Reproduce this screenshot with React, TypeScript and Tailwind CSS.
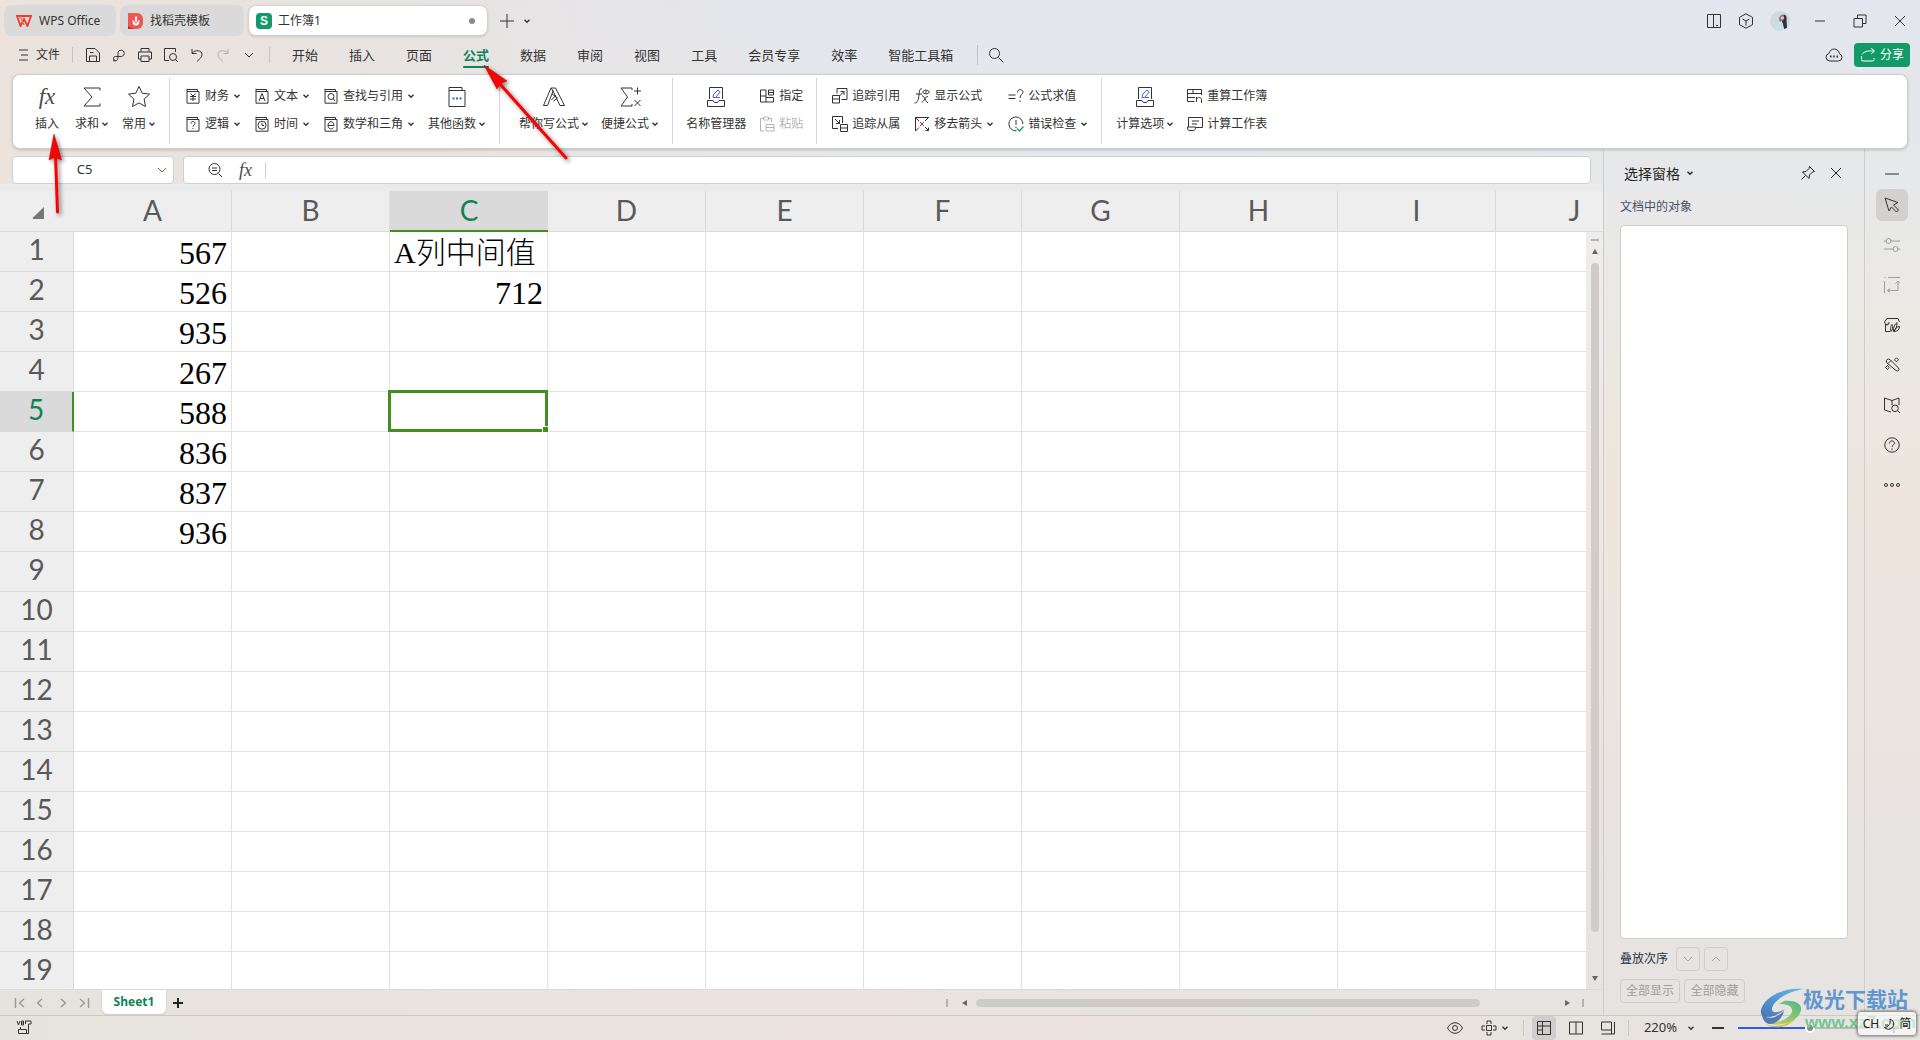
import type { ReactNode } from 'react';
import clsx from 'clsx';

const INK = 'text-[#333]';

type IconProps = { d: string; size?: string; className?: string; box?: string; children?: ReactNode };

function Icon({ d, size = 'size-4', className, box = '0 0 16 16', children }: IconProps) {
  return (
    <svg
      viewBox={box}
      className={clsx('shrink-0', size, className)}
      fill="none"
      stroke="currentColor"
      strokeWidth="1"
      strokeLinejoin="round"
      aria-hidden="true"
    >
      <path d={d} />
      {children}
    </svg>
  );
}

// Small caret used after drop-down labels
function Caret({ className }: { className?: string }) {
  return (
    <svg viewBox="0 0 8 8" className={clsx('size-2 shrink-0', className)} fill="none" stroke="currentColor" strokeWidth="1.4" aria-hidden="true">
      <path d="M1.5 2.8 4 5.2 6.5 2.8" />
    </svg>
  );
}

function Fx({ className }: { className?: string }) {
  return (
    <span className={clsx("font-['Liberation_Serif',serif] italic text-[#4a4a4a]", className)}>fx</span>
  );
}

const PAGE = 'M2 1.5h10.5M2 .8v14.4h12V3.5H2M12.5 1.5v2';

const QUICK = [
  { label: '保存', left: 'ml-3', d: 'M1.5 14.5V1.5h8.5l4.5 4.5v8.5zM4.5 14.5V9h7v5.5M5 5.5h3.5' },
  { label: '输出', left: 'ml-[10px]', d: 'M2 13.5c3.500 1.500 5-1 5-3V5.500a3.200 3.200 0 1 1 3.500 4H4.500a2 2 0 1 0 0 4' },
  { label: '打印', left: 'ml-[10px]', d: 'M4 5V1.500h8V5M4 12H1.500V5h13v7H12M4 9h8v5.500H4z' },
  { label: '打印预览', left: 'ml-[10px]', d: 'M6 13.500H1.500v-12h11V5M10 6.500a3.500 3.500 0 1 1 0 7 3.500 3.500 0 0 1 0-7M12.500 12.500l2.500 2.500' },
  { label: '撤销', left: 'ml-[10px]', d: 'M3 2v4.500h4.500M3 6C6 2.500 13 3 13 7.500c0 3-2.500 4.500-5 7' },
];

const MENUS = ['开始', '插入', '页面', '公式', '数据', '审阅', '视图', '工具', '会员专享', '效率', '智能工具箱'];

function Big({ icon, label, drop, className }: { icon: ReactNode; label: string; drop?: boolean; className?: string }) {
  return (
    <button className={clsx('flex flex-col items-center gap-2', className)}>
      <span className="flex h-[22px] items-center justify-center">{icon}</span>
      <span className="flex h-4 items-center gap-0.5 whitespace-nowrap text-[12px] leading-4">
        {label}
        {drop && <Caret />}
      </span>
    </button>
  );
}

function Small({ icon, label, drop, dim }: { icon: ReactNode; label: string; drop?: boolean; dim?: boolean }) {
  return (
    <button className={clsx('flex h-4 items-center whitespace-nowrap text-[12px] leading-4', dim && 'text-[#b4b4b4]')}>
      {icon}
      <span className="ml-1">{label}</span>
      {drop && <Caret className="ml-1" />}
    </button>
  );
}

function Stack({ children, className }: { children: ReactNode; className?: string }) {
  return <div className={clsx('flex flex-col items-start gap-3 pt-0.5', className)}>{children}</div>;
}

function Divider() {
  return <div className="-mt-2 mx-[13px] h-[66px] w-px shrink-0 bg-[#d6d6d6]" />;
}

function PageIcon({ d }: { d: string }) {
  return <Icon d={PAGE}><path d={d} /></Icon>;
}

function EditBox() {
  return (
    <Icon box="0 0 20 22" size="h-[22px] w-5" d="M3.500 13V1.500h13V13M1.500 14.500H7l1.500 2h3l1.500-2h5.500v6h-17z">
      <path d="M7 11.500l.5-3L12 4l2.200 2-4.700 5.500z M10 11.500h4" stroke="#3a62e0" />
    </Icon>
  );
}

function Ribbon() {
  return (
    <section className="relative z-10 ml-3 mr-3 flex h-[75px] items-start rounded-lg border border-[#d0cfcf] bg-white pl-[19px] pt-[11px] shadow-[0_1px_3px_rgba(0,0,0,0.18)]">
      <div className="flex gap-[13px]">
        <Big className="w-[30px]" icon={<Fx className="text-[23px] leading-5" />} label="插入" />
        <Big drop icon={<Icon size="size-[22px]" box="0 0 22 22" d="M19 4.500V2H3l8 9-8 9h16v-2.500" />} label="求和" />
        <Big drop icon={<Icon size="size-6" box="0 0 24 24" d="M12 1.500l3.200 6.700 7.300.9-5.400 5 1.400 7.400L12 17.900l-6.500 3.600 1.400-7.400-5.400-5 7.300-.9z" />} label="常用" />
      </div>
      <Divider />
      <div className="flex gap-[13px] pl-0.5">
        <Stack>
          <Small drop icon={<PageIcon d="M5.500 5.500 8 8l2.500-2.500M5 8.500h6M5 11h6M8 8v5" />} label="财务" />
          <Small drop icon={<PageIcon d="M6 7.500c0-3 4-2.500 4 0 0 1.500-2 1.500-2 3.200M8 12v1" />} label="逻辑" />
        </Stack>
        <Stack>
          <Small drop icon={<PageIcon d="M5 13l3-7.500 3 7.500M6 10.500h4" />} label="文本" />
          <Small drop icon={<PageIcon d="M8 5.200a4 4 0 1 1 0 8 4 4 0 0 1 0-8M8 7v2.500h2" />} label="时间" />
        </Stack>
        <Stack>
          <Small drop icon={<PageIcon d="M8 5.500a3 3 0 1 1 0 6 3 3 0 0 1 0-6M10 10.500l2 2.500" />} label="查找与引用" />
          <Small drop icon={<PageIcon d="M5 9.500h6c0-5-6-5-6 0 0 4 4.500 4 5.500 2" />} label="数学和三角" />
        </Stack>
        <Big
          drop
          icon={
            <Icon box="0 0 20 22" size="h-[22px] w-5" d="M2 4.500V1.500h13v3M2 4.500h16v16H2z">
              <path d="M5.500 12.500h2M9 12.500h2M12.500 12.500h2" stroke="#3a62e0" strokeWidth="2" />
            </Icon>
          }
          label="其他函数"
        />
      </div>
      <Divider />
      <div className="flex gap-3 pl-1.5">
        <Big drop icon={<Icon box="0 0 24 22" size="h-[22px] w-6" d="M1.500 19.500 9 2h4.500l9 17.500H18L10.500 4M9 2l2 3-5.500 14.500h-4M14 9 9.500 14M10 8l5.500 4-4 3" />} label="帮你写公式" />
        <Big drop icon={<Icon box="0 0 24 22" size="h-[22px] w-6" d="M14 4V2H3l6.500 9L3 20h11v-2M16 5h7M19.500 1.500v7M16.500 14l6 6M22.500 14l-6 6" />} label="便捷公式" />
      </div>
      <Divider />
      <div className="flex gap-[13px]">
        <Big icon={<EditBox />} label="名称管理器" />
        <Stack>
          <Small icon={<Icon d="M7 2H1.500v12H7zM1.500 8H7M9.500 2h5v5h-5zM7 9.500h7.500V14H7M9.500 4.500h5" />} label="指定" />
          <Small dim icon={<Icon d="M5 15H1.500V2.500H4M10 2.500h2.500V6M4.500 1h5v3h-5zM7 8.500h8V15H7zM7 11.500h8" />} label="粘贴" />
        </Stack>
      </div>
      <Divider />
      <div className="flex gap-[14px] pl-0.5">
        <Stack>
          <Small icon={<Icon d="M5 5.500v-5h10v11H9.500M.5 7.500h7V15h-7zM.5 11h7M7.500 8l4.500-4.500M8.500 3.500H12V7" />} label="追踪引用" />
          <Small icon={<Icon d="M6 12.500H.5v-12h10V7M8.500 8.500h7v7h-7zM8.500 12h7M3 3l4.500 4.500M7.500 4v3.500H4" />} label="追踪从属" />
        </Stack>
        <Stack>
          <Small icon={<Icon d="M8 1C5.500 0 5.500 3 5 7s-1 8-4.500 8M2 6h6M8 8c3-1 3 7 6 6.500M14 8.500c-2.500-1-4 6-6.500 5.500M8.500 4c1.500-2.500 5.500-2.500 7 0-1.500 2.500-5.500 2.500-7 0M12 3v2" />} label="显示公式" />
          <Small
            drop
            icon={
              <Icon d="M1.500 15V1.500H15M1.500 15 5 11.500M11 5l3-3M11 11l3.500 3.500M14.500 11.500v3h-3M1.500 1.500 5 5">
                <path d="M6 6l4 4M10 6l-4 4" stroke="#d0214b" />
              </Icon>
            }
            label="移去箭头"
          />
        </Stack>
        <Stack>
          <Small icon={<Icon d="M.5 7h7M.5 10.500h7M9.500 4.500c0-4 5.500-3.500 5.500-.5 0 2.500-3 2.500-3 6M12 12.500v1.500" />} label="公式求值" />
          <Small
            drop
            icon={
              <Icon d="M8.500 14.900A7 7 0 1 1 14.900 8M8 4v5M8 10.500V12">
                <path d="M9 12.500l2.500 2.500L15.500 10.500" stroke="#16a068" strokeWidth="1.400" />
              </Icon>
            }
            label="错误检查"
          />
        </Stack>
      </div>
      <Divider />
      <div className="flex gap-[13px] pl-px">
        <Big drop icon={<EditBox />} label="计算选项" />
        <Stack>
          <Small icon={<Icon d="M7.500 13.500h-7v-12h14V7M.5 5.500h14M.5 9.500H8M6 1.500v4M9.500 9v5M9.500 11.500c1-3 5-2.500 5 0V15" />} label="重算工作簿" />
          <Small icon={<Icon d="M1.500 11V1.500h14v10H9M.5 11h8c0 2-.5 3-2 3.500H2C.8 14 .5 12.500.5 11M5 5h7M5 8h5" />} label="计算工作表" />
        </Stack>
      </div>
    </section>
  );
}

const COLS = ['A', 'B', 'C', 'D', 'E', 'F', 'G', 'H', 'I', 'J'];
const COL_A = [567, 526, 935, 267, 588, 836, 837, 936];

function cellValue(col: string, row: number) {
  if (col === 'A') return COL_A[row - 1];
  if (col === 'C' && row === 2) return 712;
  if (col === 'C' && row === 1) return 'A列中间值';
  return undefined;
}

function Cell({ col, row }: { col: string; row: number }) {
  const value = cellValue(col, row);
  return (
    <td
      className={clsx(
        "relative h-10 border-b border-r border-[#e2e2e2] p-0 align-bottom font-['Liberation_Serif','Noto_Sans_CJK_SC',serif] text-black",
        typeof value === 'number' ? 'pr-1 text-right text-[32px] leading-9' : 'pl-1 text-[30px] font-light leading-9 whitespace-nowrap'
      )}
    >
      {value}
      {col === 'C' && row === 5 && (
        <span className="absolute -left-0.5 -top-0.5 -bottom-px -right-px z-10 border-[3px] border-[#418f1f]">
          <span className="absolute -bottom-1 -right-1 size-[7px] border border-white bg-[#418f1f]" />
        </span>
      )}
    </td>
  );
}

function Grid() {
  return (
    <div className="min-w-0 flex-1 overflow-hidden bg-white">
      <table className="w-[1654px] table-fixed border-separate border-spacing-0 font-[Lato,sans-serif] text-[28px] leading-8 text-[#595959]">
        <thead>
          <tr>
            <th className="h-[41px] w-[74px] border-b border-[#dadada] bg-[#eee] p-0">
              <svg viewBox="0 0 12 12" className="ml-8 mt-1 size-3" aria-hidden="true">
                <path d="M12 0v12H1.500Q0 12 1 10.500z" fill="#777" />
              </svg>
            </th>
            {COLS.map((c) => (
              <th
                key={c}
                className={clsx(
                  'p-0 pb-0.5 font-normal',
                  c === 'C' ? 'border-b-2 border-[#418f1f] bg-[#dadada] text-[#0f8256]' : 'border-b border-r border-[#dadada] bg-[#eee]'
                )}
              >
                {c}
              </th>
            ))}
          </tr>
        </thead>
        <tbody>
          {Array.from({ length: 19 }, (_, i) => i + 1).map((row) => (
            <tr key={row}>
              <th
                className={clsx(
                  'h-10 border-b p-0 pb-1.5 font-normal',
                  row === 5
                    ? 'border-r-2 border-b-[#dadada] border-r-[#418f1f] bg-[#dadada] text-[#0f8256]'
                    : 'border-r border-[#dadada] bg-[#eee]'
                )}
              >
                {row}
              </th>
              {COLS.map((c) => (
                <Cell key={c} col={c} row={row} />
              ))}
            </tr>
          ))}
        </tbody>
      </table>
    </div>
  );
}

function TitleBar() {
  return (
    <header className="flex h-9 items-end pl-1 text-[12px]">
      <button className="flex h-[31px] w-28 items-center gap-[7px] rounded-lg bg-[#dadada] pl-3">
        <svg viewBox="0 0 16 12" className="h-3 w-4" fill="none" stroke="#ec3b2b" strokeWidth="1.800" aria-hidden="true">
          <path d="M1 1h14l-3.500 10L8 4l-3.500 7z" />
          <path d="M4 1l4 9" stroke="#f2702d" strokeWidth="1.300" />
        </svg>
        WPS Office
      </button>
      <button className="ml-1 flex h-[31px] w-[124px] items-center gap-[7px] rounded-lg bg-[#dadada] pl-2">
        <svg viewBox="0 0 15 16" className="h-4 w-[15px]" aria-hidden="true">
          <path d="M0 0h9a6 6 0 0 1 6 6v4a6 6 0 0 1-6 6H0z" fill="#ee5555" />
          <path d="M0 16v-3l6 3z" fill="#c22c35" />
          <path d="M8 2.500c-1.500 3-1.500 5 0 7 1.500-2 1.500-4 0-7M4.500 7c0 4 1 5.500 3.500 5.500S11.500 11 11.500 7C9.500 8 9 9 8 11 7 9 6.500 8 4.500 7" fill="#fff" />
        </svg>
        找稻壳模板
      </button>
      <button className="ml-1 flex h-[31px] w-60 items-center gap-1.5 rounded-lg border border-[#d2d2d2] bg-white pl-[7px] pr-3 shadow-sm">
        <span className="flex size-4 items-center justify-center rounded-sm bg-[#129a68] font-['Liberation_Sans',sans-serif] text-[12px] font-bold leading-none text-white">S</span>
        工作簿1
        <span className="ml-auto size-1.5 rounded-full bg-[#8c8c8c]" />
      </button>
      <div className="ml-[11px] flex h-[31px] items-center gap-2">
        <button aria-label="新建"><Icon d="M8 1v14M1 8h14" /></button>
        <button aria-label="标签列表"><Caret /></button>
      </div>
      <div className="ml-auto flex h-[31px] items-center pr-3">
        <button aria-label="布局"><Icon d="M1.500 1.500h13v13h-13zM7.500 1.500v13M10 12.500h2" /></button>
        <button aria-label="应用" className="ml-4"><Icon d="M8 .8l6.500 3.500v7.400L8 15.200 1.500 11.700V4.300zM4.500 6 8 8l3.500-2M8 8v4.500" /></button>
        <svg viewBox="0 0 20 20" className="ml-4 size-5" aria-hidden="true">
          <circle cx="10" cy="10" r="10" fill="#cddadf" />
          <path d="M13 4c3-1 4 2 3.500 5l.5 8-3 1-2-7z" fill="#32303c" />
          <path d="M7 10l4-1 2 4 1 6c-3 1-6 0-8-2z" fill="#c5e3e6" />
          <path d="M9 8c0-3 3-5 5-4l-1 5-3 2z" fill="#8d6f6c" />
          <circle cx="12.500" cy="7" r="1.800" fill="#e5bfae" />
        </svg>
        <button aria-label="最小化" className="ml-[22px]"><Icon d="M3 8h10" /></button>
        <button aria-label="还原" className="ml-6"><Icon d="M2 5.500h8.500V14H2zM5.500 5.500V2H14v8.500h-3.500" /></button>
        <button aria-label="关闭" className="ml-6"><Icon d="M3 3l10 10M13 3 3 13" /></button>
      </div>
    </header>
  );
}

function MenuBar() {
  return (
    <nav className="flex h-[38px] items-center pl-[18px] pr-2.5">
      <button className="flex items-center gap-1.5 text-[12px]">
        <Icon size="size-3" box="0 0 12 12" d="M1 1h9M3 6h7M1 11h9" />
        文件
      </button>
      <div className="ml-3 h-4 w-px bg-[#c6c4c4]" />
      {QUICK.map((q) => (
        <button key={q.label} aria-label={q.label} className={q.left}>
          <Icon d={q.d} />
        </button>
      ))}
      <button aria-label="恢复" className="ml-[10px] text-[#b0b0b0]">
        <Icon d="M13 2v4.500H8.500M13 6C10 2.500 3 3 3 7.500c0 3 2.500 4.500 5 7" />
      </button>
      <button aria-label="更多" className="ml-3">
        <Icon size="size-3" box="0 0 12 12" d="M2 4l4 4 4-4" />
      </button>
      <div className="ml-3.5 h-4 w-px bg-[#c6c4c4]" />
      <div className="flex gap-[31px] pl-[22px] text-[13px] leading-5">
        {MENUS.map((m) => (
          <button
            key={m}
            className={clsx('relative', m === '公式' && 'font-bold text-[#0f8256]')}
          >
            {m}
            {m === '公式' && <span className="absolute inset-x-0 -bottom-[3px] h-0.5 rounded-full bg-[#0f8256]" />}
          </button>
        ))}
      </div>
      <div className="ml-6 h-5 w-px bg-[#c6c4c4]" />
      <button aria-label="搜索" className="ml-2.5">
        <Icon d="M6.500 1.500a5 5 0 1 1 0 10 5 5 0 0 1 0-10M10.500 10.500l5 5" />
      </button>
      <button aria-label="云同步" className="ml-auto">
        <Icon box="0 0 18 16" size="h-4 w-[18px]" d="M5 14h8.500a3.700 3.700 0 0 0 1-7.200C13.500.5 5 .5 4 6.500A3.800 3.800 0 0 0 5 14">
          <path d="M5 9.500h1.500M8.200 9.500h1.500M11.500 9.500H13" strokeWidth="1.800" />
        </Icon>
      </button>
      <button className="ml-[11px] flex h-6 w-14 items-center justify-center gap-1 rounded bg-[#129a68] text-[12px] text-white">
        <Icon d="M1.500 9v3.500q0 1.500 1.500 1.500h9.500q1.500 0 1.500-1.500V11M2 7.500C4 4.500 7 3.500 14 4M11 1l3.500 3L11 7" />
        分享
      </button>
    </nav>
  );
}

function FormulaBar() {
  return (
    <div className="mt-[7px] flex h-7 gap-[9px] pl-3 pr-3">
      <div className="flex w-[162px] items-center rounded border border-[#cfcfcf] bg-white">
        <input aria-label="名称框" defaultValue="C5" className="w-[143px] bg-transparent text-center text-[13px] outline-none" />
        <button aria-label="展开名称框" className="text-[#666]">
          <Icon size="size-3" box="0 0 12 12" d="M2 4l4 4 4-4" />
        </button>
      </div>
      <div className="flex min-w-0 flex-1 items-center rounded border border-[#cfcfcf] bg-white pl-[23px]">
        <Icon d="M7.500 1.500a5.500 5.500 0 1 1 0 11 5.500 5.500 0 0 1 0-11M11.500 11.500l3.500 3.500M5 6h5M5 8.500h5" />
        <Fx className="ml-4 w-[18px] text-[18px] leading-5" />
        <div className="ml-2 h-4 w-px bg-[#cfcfcf]" />
        <input aria-label="编辑栏" className="min-w-0 flex-1 bg-transparent px-2 text-[13px] outline-none" />
      </div>
    </div>
  );
}

function VerticalScroll() {
  return (
    <div className="flex w-[17px] flex-col items-center bg-gradient-to-b from-[#eee] via-[#eee6e0] to-[#e6e3e1]">
      <div className="h-[41px] w-full shrink-0 border-b border-[#dadada] bg-[#eee]" />
      <div className="mt-[7px] h-0.5 w-2 shrink-0 bg-[#b5b3b2]" />
      <svg viewBox="0 0 6 5" className="mt-2 h-[5px] w-1.5 shrink-0" aria-hidden="true"><path d="M3 0l3 5H0z" fill="#666" /></svg>
      <div className="mb-[50px] mt-[9px] w-2 flex-1 rounded-full bg-[#cfccca]" />
      <svg viewBox="0 0 6 5" className="-mt-1.5 mb-2 h-[5px] w-1.5 shrink-0" aria-hidden="true"><path d="M3 5l3-5H0z" fill="#666" /></svg>
    </div>
  );
}

function SheetBar() {
  return (
    <div className="flex h-[26px] shrink-0 items-center border-t border-[#dadada] pl-3.5 text-[#9a9896]">
      <button aria-label="第一张"><Icon size="size-3" box="0 0 12 12" d="M1.500 1v10M10 2 5.500 6l4.500 4" className="stroke-[1.5]" /></button>
      <button aria-label="上一张" className="ml-2"><Icon size="size-3" box="0 0 12 12" d="M8 2 3.500 6 8 10" className="stroke-[1.5]" /></button>
      <button aria-label="下一张" className="ml-3"><Icon size="size-3" box="0 0 12 12" d="M3 2l4.500 4L3 10" className="stroke-[1.5]" /></button>
      <button aria-label="最后一张" className="ml-2"><Icon size="size-3" box="0 0 12 12" d="M10.500 1v10M2 2l4.500 4L2 10" className="stroke-[1.5]" /></button>
      <button className="-mt-0.5 ml-3 h-6 w-16 rounded-b-md bg-white text-[12px] font-bold text-[#0f8256] shadow-sm">Sheet1</button>
      <button aria-label="新建工作表" className="ml-1.5 text-[#222]">
        <svg viewBox="0 0 12 12" className="size-3" stroke="currentColor" strokeWidth="2" aria-hidden="true"><path d="M6 1v10M1 6h10" /></svg>
      </button>
      <div className="ml-auto flex items-center pr-[19px]">
        <div className="h-2 w-0.5 bg-[#b5b3b2]" />
        <svg viewBox="0 0 5 6" className="ml-3.5 h-1.5 w-[5px]" aria-hidden="true"><path d="M0 3l5-3v6z" fill="#666" /></svg>
        <div className="ml-[9px] h-2 w-[504px] rounded-full bg-[#cfcbc9]" />
        <svg viewBox="0 0 5 6" className="ml-[85px] h-1.5 w-[5px]" aria-hidden="true"><path d="M5 3L0 0v6z" fill="#666" /></svg>
        <div className="ml-3 h-2 w-0.5 bg-[#b5b3b2]" />
      </div>
    </div>
  );
}

function SelectionPane() {
  return (
    <aside className="flex w-[261px] flex-col border-l border-[#cfcdcc] pl-4 pr-4 text-[12px]">
      <div className="mt-[14px] flex h-5 items-center pl-1 text-[14px] text-[#222]">
        选择窗格
        <Caret className="ml-1.5" />
        <button aria-label="固定" className="ml-auto"><Icon d="M9.500 1.500l5 5-2 .5-3 3-.5 3.500-6.500-6.500L6 6.500l3-3zM5.500 10.500 1.500 14.500" /></button>
        <button aria-label="关闭窗格" className="ml-3 mr-1"><Icon d="M3 3l10 10M13 3 3 13" /></button>
      </div>
      <p className="mt-[14px] leading-5 text-[#474e66]">文档中的对象</p>
      <div className="mt-2 flex-1 rounded border border-[#cfcdcc] bg-white" />
      <div className="mt-2 flex items-center gap-1 text-[#2b3040]">
        叠放次序
        <button aria-label="下移一层" className="ml-1 flex size-6 items-center justify-center rounded border border-[#cfcdcc] text-[#a5a3a2]">
          <Icon size="size-3" box="0 0 12 12" d="M2 4l4 4 4-4" />
        </button>
        <button aria-label="上移一层" className="flex size-6 items-center justify-center rounded border border-[#cfcdcc] text-[#a5a3a2]">
          <Icon size="size-3" box="0 0 12 12" d="M2 8l4-4 4 4" />
        </button>
      </div>
      <div className="mb-3 mt-2 flex gap-1 text-[#a09e9d]">
        <button className="h-6 w-[60px] rounded border border-[#cfcdcc]">全部显示</button>
        <button className="h-6 w-[61px] rounded border border-[#cfcdcc]">全部隐藏</button>
      </div>
    </aside>
  );
}

const SIDE_TOOLS = [
  { label: '选择', active: true, d: 'M1 1l13 4.500-4.500 2.500 5 5-2 2-5-5L5 14z' },
  { label: '属性', dim: true, d: 'M0 4h2.500M6.500 4H16M4.500 1.500a2.500 2.500 0 0 1 0 5 2.500 2.500 0 0 1 0-5M0 12h9.500M13.500 12H16M11.500 9.500a2.500 2.500 0 0 1 0 5 2.500 2.500 0 0 1 0-5' },
  { label: '分析', dim: true, d: 'M.5.500h1M4 .500h12M.5 4v12M14 4v9.500H4M11.500 6.500 14 4l2 2.500M6 11.500l-2.500 2L6 15.500' },
  { label: '模板', d: 'M1.500 7v7.500H6M15.500 5l-1.500-3.500H3L.5 5c.5 3 3.500 3 4.500.5 0 3-2 2.500-3.500 2M7 14.500C6 10 7 9 8 7.500c1 3 1 5-1 7M9.500 14.500C9 10 11 7 13 5.500c0 4-1 7-3.500 9M10 14.500c1-3 3-5 5.500-5 0 3-2 5-5.500 5' },
  { label: '美化', d: 'M6 2.500 14.500 11q1 1.500 0 2.500t-2.500 0L2.500 5.500q-.5-2 .5-3t3 0M3.500 8.500l1.500 2-1.500 2-2-2zM12.500.800l2 2-2 2-2-2zM7 3.500l-3 3' },
  { label: '查找', d: 'M7 15l-6.500-2V1L8 3.500 15 1v7M8 3.500V8M11 8a3.300 3.300 0 1 1 0 6.600A3.300 3.300 0 0 1 11 8M13.500 13.500 16 16' },
  { label: '帮助', d: 'M8 .800a7.200 7.200 0 1 1 0 14.400A7.200 7.200 0 0 1 8 .8M5.500 6.500c0-4 5-3 5-.3C10.500 8 8 8 8 10M8 11.500V13' },
  { label: '更多工具', d: 'M2 6.500a1.500 1.500 0 1 1 0 3 1.500 1.500 0 0 1 0-3M8 6.500a1.500 1.500 0 1 1 0 3 1.500 1.500 0 0 1 0-3M14 6.500a1.500 1.500 0 1 1 0 3 1.500 1.500 0 0 1 0-3' },
];

function SideTools() {
  return (
    <div className="flex w-14 flex-col items-center gap-2 border-l border-[#cfcdcc] pr-0.5 pt-6">
      <div className="mb-1.5 h-0.5 w-3.5 bg-[#8a8a8a]" />
      {SIDE_TOOLS.map((t) => (
        <button
          key={t.label}
          aria-label={t.label}
          className={clsx('flex size-8 items-center justify-center rounded-md', t.active && 'bg-[#d2d1d0]', t.dim && 'text-[#a09e9b]')}
        >
          <Icon d={t.d} />
        </button>
      ))}
    </div>
  );
}

function StatusBar() {
  return (
    <footer className="flex h-[25px] shrink-0 items-center border-t border-[#cbc8c6] pl-4 pr-5">
      <Icon d="M1 1l1.500 4L4 1M5.500 1v4h2V1zM5.500 3h2M9 1h6v3h-2.500v9.500H2.500v-4h2V7M4.500 9.500h6v4M9.500 1v3" />
      <div className="ml-auto flex h-full items-center">
        <button aria-label="护眼模式"><Icon d="M.5 8C4 1 12 1 15.500 8 12 15 4 15 .5 8M8 5.500a2.500 2.500 0 1 1 0 5 2.500 2.500 0 0 1 0-5" /></button>
        <button aria-label="聚焦" className="ml-[18px] flex items-center gap-1">
          <Icon d="M5.500 5.500h5v5h-5zM6 4V1h4v3M6 12v3h4v-3M4 6H1v4h3M12 6h3v4h-3" />
          <Caret />
        </button>
        <div className="ml-3.5 h-4 w-px bg-[#cbc8c6]" />
        <button aria-label="普通视图" className="ml-2 flex h-6 w-6 items-center justify-center rounded bg-[#d0cdcc]"><Icon d="M1.500 1.500h13v13h-13zM1.500 6h13M6.500 1.500v13M1.500 10h5" /></button>
        <button aria-label="分页预览" className="ml-3"><Icon d="M1.500 2h13v12h-13zM8 2v12" /></button>
        <button aria-label="阅读视图" className="ml-4"><Icon d="M1.500 2h10v8h-10zM14.500 2v12h-13M11.500 10v4" /></button>
        <div className="ml-3 h-4 w-px bg-[#cbc8c6]" />
        <button className="ml-[15px] flex items-center gap-2.5 text-[13px]">
          220% <Caret />
        </button>
        <button aria-label="缩小" className="ml-[17px] h-0.5 w-3 bg-[#333]" />
        <input
          type="range"
          aria-label="缩放"
          min={0}
          max={100}
          defaultValue={50}
          className="ml-3.5 h-0.5 w-[144px] appearance-none bg-[linear-gradient(to_right,#2f5be0_50%,#bdbab8_50%)] [&::-webkit-slider-thumb]:size-2.5 [&::-webkit-slider-thumb]:appearance-none [&::-webkit-slider-thumb]:rounded-full [&::-webkit-slider-thumb]:border-2 [&::-webkit-slider-thumb]:border-white [&::-webkit-slider-thumb]:bg-[#888]"
        />
        <button aria-label="放大" className="ml-1.5"><Icon size="size-3" box="0 0 12 12" d="M6 1v10M1 6h10" /></button>
      </div>
    </footer>
  );
}

// Red pointers drawn over the ribbon
function Pointers() {
  return (
    <svg viewBox="0 0 600 230" className="pointer-events-none absolute left-0 top-0 z-20 h-[230px] w-[600px] drop-shadow-[2px_2px_2px_rgba(0,0,0,0.5)]" aria-hidden="true">
      <path d="M500 84 566 158" stroke="#f00" strokeWidth="3" strokeLinecap="round" />
      <path d="M484 65 507 81 501 83 497 89z" fill="#f00" stroke="#b00" strokeWidth=".5" />
      <path d="M55.500 156 57.500 212" stroke="#f00" strokeWidth="3" strokeLinecap="round" />
      <path d="M54 134 61.500 160 55.500 157 49 160z" fill="#f00" stroke="#b00" strokeWidth=".5" />
    </svg>
  );
}

function Watermark() {
  return (
    <div className="pointer-events-none absolute bottom-0 right-0 h-[53px] w-[162px]">
      <svg viewBox="0 0 44 42" className="absolute left-0.5 top-0 h-[42px] w-11" aria-hidden="true">
        <defs>
          <linearGradient id="swirl-blue" x1="0" y1="1" x2="1" y2="0">
            <stop offset="0" stopColor="#4a72b8" />
            <stop offset="1" stopColor="#5cc0ea" />
          </linearGradient>
          <linearGradient id="swirl-green" x1="0" y1="1" x2="1" y2="0">
            <stop offset="0" stopColor="#c7d95a" />
            <stop offset="1" stopColor="#4fb58a" />
          </linearGradient>
        </defs>
        <path d="M43 2C22 0 4 11 1 23c-1 6 3 8 9 7 6-1 11-4 15-8-5 3-12 5-13 1C11 17 22 6 43 2z" fill="url(#swirl-blue)" />
        <path d="M24 14c10-1 18 2 17 9-2 10-17 18-34 13 12 0 22-4 25-11 1-5-3-8-13-8z" fill="url(#swirl-green)" />
        <path d="M2 27c4 6 14 5 22-3-2 8-9 14-15 13-4-1-7-5-7-10z" fill="#5679b5" />
        <path d="M5 37c10 4 24 1 32-7-6 9-20 14-32 7z" fill="#d6c24c" />
      </svg>
      <span className="absolute left-[45px] top-0 whitespace-nowrap text-[21px] font-bold leading-6 text-[#5f97ce]">极光下载站</span>
      <span className="absolute left-[47px] top-[26px] whitespace-nowrap font-['Liberation_Sans',sans-serif] text-[17px] font-bold leading-5 text-[#72c795]">www.xz7.com</span>
      <div className="absolute bottom-1 right-[3px] flex h-[25px] w-[60px] items-center justify-center gap-1 rounded border border-[#999] bg-white/60 text-[12px] text-[#222] shadow-[0_0_3px_rgba(0,0,0,0.6)]">
        <span>CH</span>
        <Icon size="size-3" box="0 0 12 12" d="M7 1c5 2 5 8 0 10-2 .5-4 0-5.500-1.500C6 9 8 5 7 1M2 7h3" />
        <span>简</span>
      </div>
    </div>
  );
}

export default function App() {
  return (
    <div
      className={clsx(
        "relative flex h-screen flex-col overflow-hidden bg-[linear-gradient(to_right,#ebe3dc_0%,#e8e3e0_18%,transparent_45%),linear-gradient(to_bottom,#e3e6ee_0%,#e7e8ea_16%,#eae9e5_28%,#eee6dd_48%,#ede5e0_62%,#e6e3e1_85%)] font-['Noto_Sans','Noto_Sans_CJK_SC',sans-serif]",
        INK
      )}
    >
      <TitleBar />
      <MenuBar />
      <Ribbon />
      <div className="flex min-h-0 flex-1">
        <main className="flex min-w-0 flex-1 flex-col">
          <FormulaBar />
          <div className="h-[7px] shrink-0 bg-[#eaeaea]" />
          <div className="flex min-h-0 flex-1">
            <Grid />
            <VerticalScroll />
          </div>
          <div className="bg-[linear-gradient(to_right,#e6e3de,#ece2df_50%,#e7e3df_80%,#e6e3e1)]">
            <SheetBar />
          </div>
        </main>
        <SelectionPane />
        <SideTools />
      </div>
      <div className="bg-[linear-gradient(to_right,#e6e3de,#ece2df_50%,#e7e3df_80%,#e6e3e1)]">
        <StatusBar />
      </div>
      <Pointers />
      <Watermark />
    </div>
  );
}
